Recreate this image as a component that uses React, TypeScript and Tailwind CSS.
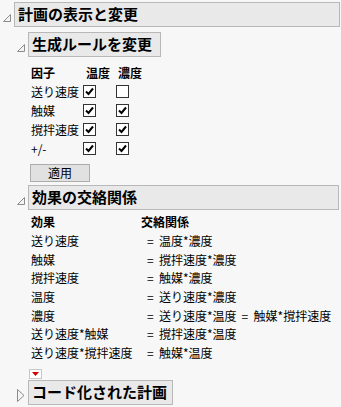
import React from 'react';

const OpenTri = () => (
  <svg width="8" height="8" viewBox="0 0 8 8" className="shrink-0">
    <path d="M7.5 0.5 L7.5 7.5 L0.5 7.5 Z" fill="#f4f4f4" stroke="#8c8c8c" strokeWidth="1" />
  </svg>
);

const ClosedTri = () => (
  <svg width="8" height="13" viewBox="0 0 8 13" className="shrink-0">
    <path d="M0.5 0.5 L7 6.5 L0.5 12.5 Z" fill="#f4f4f4" stroke="#8c8c8c" strokeWidth="1" />
  </svg>
);

const Check: React.FC<{ on: boolean }> = ({ on }) => (
  <div className="w-[13px] h-[13px] bg-white border border-[#333] flex items-center justify-center">
    {on && (
      <svg width="9" height="9" viewBox="0 0 9 9">
        <path d="M1 4.5 L3.5 7 L8 1.5" fill="none" stroke="#000" strokeWidth="2" />
      </svg>
    )}
  </div>
);

const Header: React.FC<{ title: string; className: string; closed?: boolean }> = ({ title, className, closed }) => (
  <div className="flex items-center">
    <div className="w-[13px] flex justify-start pl-[2px] pt-[6px]">{closed ? <ClosedTri /> : <OpenTri />}</div>
    <div className={`h-[25px] bg-[#e9e9e9] border border-[#b8b8b8] flex items-center pl-[3px] text-[15px] font-bold text-black ${className}`}>
      {title}
    </div>
  </div>
);

const factors = [
  { name: '送り速度', a: true, b: false },
  { name: '触媒', a: true, b: true },
  { name: '撹拌速度', a: true, b: true },
  { name: '+/-', a: true, b: true },
];

const aliases: [string, string[]][] = [
  ['送り速度', ['温度*濃度']],
  ['触媒', ['撹拌速度*濃度']],
  ['撹拌速度', ['触媒*濃度']],
  ['温度', ['送り速度*濃度']],
  ['濃度', ['送り速度*温度', '触媒*撹拌速度']],
  ['送り速度*触媒', ['撹拌速度*温度']],
  ['送り速度*撹拌速度', ['触媒*温度']],
];

export default function App() {
  return (
    <div
      className="w-[341px] h-[407px] overflow-hidden bg-[#f7f7f7] text-black"
      style={{ fontFamily: '"Noto Sans CJK JP", "Noto Sans", sans-serif' }}
    >
      <div className="pt-[2px] pl-[1px]">
        <Header title="計画の表示と変更" className="w-[326px]" />
      </div>

      <div className="pl-[15px] pt-[5px]">
        <Header title="生成ルールを変更" className="w-[133px]" />

        <div className="pl-[16px] pt-[6px] text-[12px]">
          <div className="flex h-[19px] items-center font-bold">
            <div className="w-[52px]">因子</div>
            <div className="w-[33px] pl-[3px]">温度</div>
            <div className="pl-[2px]">濃度</div>
          </div>
          {factors.map((f) => (
            <div key={f.name} className="flex h-[19px] items-center">
              <div className="w-[52px] whitespace-nowrap">{f.name}</div>
              <div className="w-[33px]">
                <Check on={f.a} />
              </div>
              <Check on={f.b} />
            </div>
          ))}
          <div className="pt-[6px]">
            <button className="w-[60px] h-[18px] -ml-px bg-[#e1e1e1] border border-[#adadad] text-[12px] leading-none flex items-center justify-center">
              適用
            </button>
          </div>
        </div>

        <div className="pt-[3px]">
          <Header title="効果の交絡関係" className="w-[311px]" />
        </div>

        <div className="pl-[16px] pt-[3px] text-[12px]">
          <div className="flex h-[18.7px] items-center font-bold">
            <div className="w-[110px]">効果</div>
            <div>交絡関係</div>
          </div>
          {aliases.map(([eff, rels]) => (
            <div key={eff} className="flex h-[18.7px] items-center whitespace-nowrap">
              <div className="w-[116px]">{eff}</div>
              {rels.map((r) => (
                <div key={r} className="flex">
                  <span className="w-[12px]">=</span>
                  <span className="pr-[5px]">{r}</span>
                </div>
              ))}
            </div>
          ))}
          <div className="pt-[6px]">
            <div className="-ml-[2px] w-[13px] h-[10px] bg-white border border-[#c8c8c8] flex items-center justify-center">
              <svg width="7" height="4" viewBox="0 0 7 4">
                <path d="M0 0 L7 0 L3.5 4 Z" fill="#d40000" />
              </svg>
            </div>
          </div>
        </div>

        <div className="pt-[1px]">
          <Header title="コード化された計画" className="w-[145px]" closed />
        </div>
      </div>
    </div>
  );
}
